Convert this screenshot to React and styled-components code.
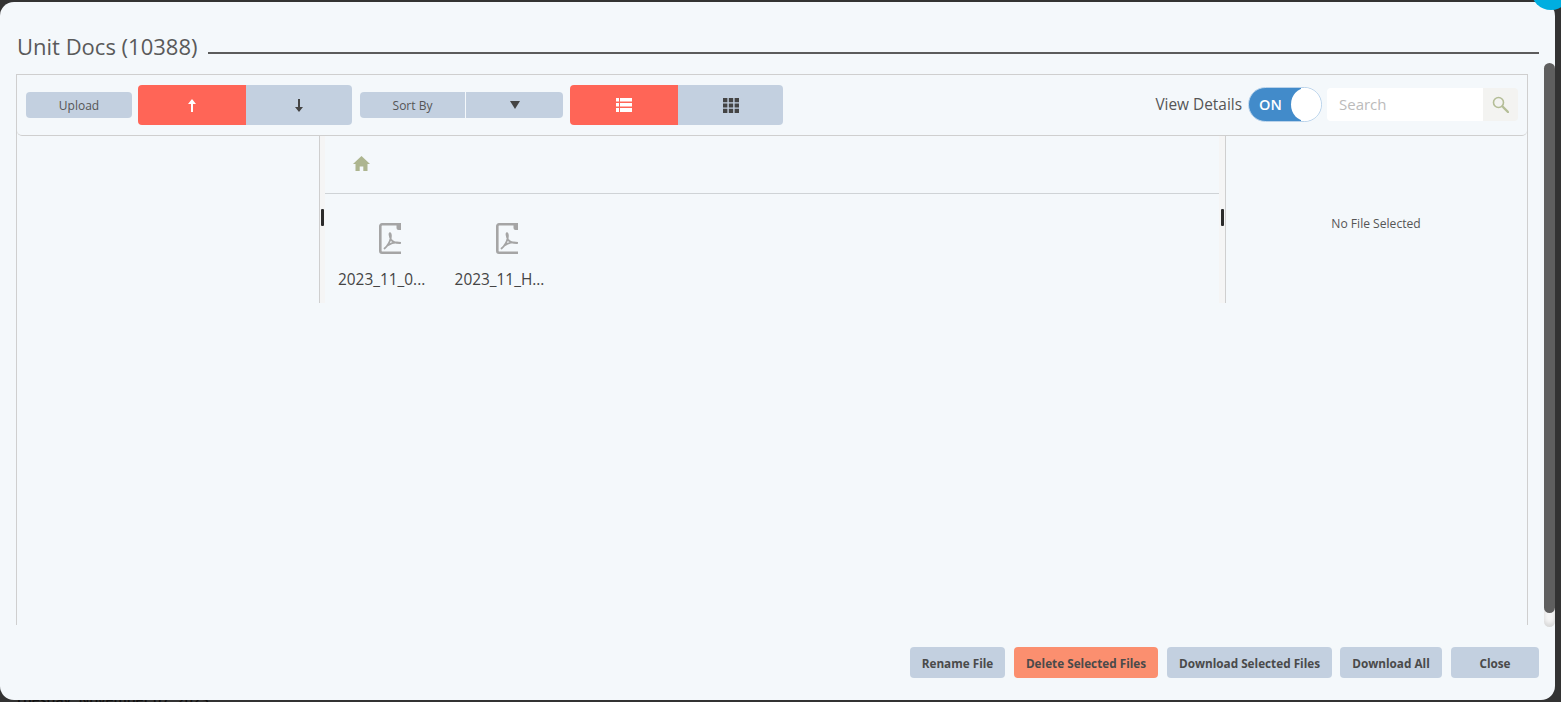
import React from "react";
import styled, { createGlobalStyle } from "styled-components";

const Global = createGlobalStyle`
  html, body {
    margin: 0;
    padding: 0;
    height: 100%;
    overflow: hidden;
    background: #333;
    font-family: "Open Sans", "Liberation Sans", sans-serif;
  }
`;

const Backdrop = styled.div`
  position: relative;
  width: 1561px;
  height: 702px;
  box-sizing: border-box;
  padding: 2px 6px 2px 0;
  background: #333;
  overflow: hidden;
`;

const BlueBlob = styled.div`
  position: absolute;
  top: -30px;
  right: -10px;
  width: 40px;
  height: 40px;
  border-radius: 50%;
  background: #00aee0;
  z-index: 2;
`;

const BehindText = styled.div`
  position: absolute;
  left: 15px;
  top: 690px;
  color: #111;
  font-size: 14px;
  font-weight: 600;
  line-height: 20px;
`;

const Modal = styled.div`
  position: relative;
  height: 100%;
  display: flex;
  flex-direction: column;
  background: #f4f8fb;
  border-radius: 14px;
  overflow: hidden;
`;

const ScrollTrack = styled.div`
  position: absolute;
  top: 61px;
  right: 0;
  width: 11px;
  height: 564px;
  border-radius: 6px;
  background: #f4f4f4;
  box-shadow: inset 0 -3px 4px rgba(0, 0, 0, 0.12);
`;

const ScrollThumb = styled.div`
  height: 550px;
  border-radius: 6px;
  background: #5f5f5f;
`;

const TitleRow = styled.div`
  display: flex;
  align-items: center;
  gap: 11px;
  height: 72px;
  box-sizing: border-box;
  padding: 16px 16px 0 17px;
`;

const Title = styled.h1`
  margin: 0;
  font-size: 22px;
  font-weight: 400;
  line-height: 38px;
  color: #5a5a5a;
  white-space: nowrap;
`;

const TitleLine = styled.div`
  flex: 1;
  height: 2px;
  margin-top: 14px;
  background: #5c5c5c;
`;

const Panel = styled.div`
  height: 551px;
  margin: 0 27px 0 16px;
  border: 1px solid #cfcfcf;
  border-bottom: 0;
  box-sizing: border-box;
`;

const Toolbar = styled.div`
  display: flex;
  align-items: center;
  height: 61px;
  box-sizing: border-box;
  padding: 0 9px;
  border-bottom: 1px solid #cfcfcf;
  border-radius: 0 0 5px 5px;
`;

const SmallButton = styled.button`
  width: 106px;
  height: 26px;
  margin: 0 6px 0 0;
  padding: 0;
  border: 0;
  border-radius: 4px;
  background: #c3d0e0;
  color: #555;
  font: 400 12px "Open Sans", sans-serif;
`;

const Segment = styled.div`
  display: flex;
  height: 40px;
  margin-right: ${(p) => p.$gap}px;
  border-radius: 4px;
  overflow: hidden;
`;

const SegButton = styled.button`
  display: flex;
  align-items: center;
  justify-content: center;
  width: ${(p) => p.$w}px;
  padding: 0;
  border: 0;
  background: ${(p) => (p.$active ? "#ff6557" : "#c3d0e0")};
  color: ${(p) => (p.$active ? "#fff" : "#444")};
`;

const SortGroup = styled.div`
  display: flex;
  height: 26px;
  width: 203px;
  margin-right: 7px;
  border-radius: 4px;
  overflow: hidden;
  background: #c3d0e0;
`;

const SortLabel = styled.div`
  display: flex;
  align-items: center;
  justify-content: center;
  width: 105px;
  border-right: 1px solid #f4f8fb;
  color: #555;
  font-size: 12px;
`;

const SortCaret = styled.div`
  flex: 1;
  display: flex;
  align-items: center;
  justify-content: center;
  color: #444;
`;

const Spacer = styled.div`
  flex: 1;
`;

const ViewLabel = styled.span`
  margin: 0 6px 2px 0;
  color: #555;
  font-size: 15.4px;
`;

const Toggle = styled.div`
  display: flex;
  align-items: center;
  width: 74px;
  height: 35px;
  margin: 0 5px 2px 0;
  box-sizing: border-box;
  border: 1px solid #b9d2ea;
  border-radius: 18px;
  background: linear-gradient(90deg, #428bca 0 72%, #fff 72%);
  overflow: hidden;
`;

const ToggleText = styled.span`
  width: 42px;
  padding-left: 10px;
  box-sizing: border-box;
  color: #fff;
  font-size: 14.5px;
  font-weight: 600;
`;

const ToggleKnob = styled.span`
  width: 31px;
  height: 33px;
  margin-left: 1px;
  border-radius: 50%;
  background: #fff;
`;

const SearchInput = styled.input`
  width: 156px;
  height: 33px;
  margin-bottom: 2px;
  box-sizing: border-box;
  padding: 0 12px;
  border: 0;
  border-radius: 4px 0 0 4px;
  background: #fff;
  color: #555;
  font: 400 15px "Open Sans", sans-serif;
  &::placeholder {
    color: #bbb;
    opacity: 1;
  }
`;

const SearchButton = styled.div`
  display: flex;
  align-items: center;
  justify-content: center;
  width: 35px;
  height: 33px;
  margin-bottom: 2px;
  border-radius: 0 4px 4px 0;
  background: #f3f3f1;
`;

const Columns = styled.div`
  display: flex;
  height: 167px;
`;

const LeftPane = styled.div`
  width: 302px;
`;

const Splitter = styled.div`
  display: flex;
  align-items: center;
  justify-content: center;
  width: ${(p) => (p.$side === "left" ? 6 : 7)}px;
  padding-bottom: 4px;
  box-sizing: border-box;
  background: #f5f5f5;
  ${(p) => (p.$side === "left" ? "border-left: 1px solid #cfcfcf;" : "border-right: 1px solid #cfcfcf;")}
`;

const Handle = styled.div`
  width: 3px;
  height: 17px;
  border-radius: 1px;
  background: #2b2b2b;
`;

const CenterPane = styled.div`
  width: 894px;
`;

const Breadcrumb = styled.div`
  display: flex;
  align-items: center;
  height: 58px;
  box-sizing: border-box;
  padding: 0 0 3px 28px;
  border-bottom: 1px solid #cfd3d6;
`;

const FileGrid = styled.div`
  display: flex;
  padding: 29px 0 0 13px;
`;

const FileItem = styled.div`
  display: flex;
  flex-direction: column;
  align-items: flex-start;
  width: 116.6px;
`;

const FileIconBox = styled.div`
  display: flex;
  margin-left: 41px;
`;

const FileName = styled.div`
  margin-top: 16px;
  color: #444;
  font-size: 15.4px;
  line-height: 20px;
  white-space: nowrap;
`;

const DetailPane = styled.div`
  flex: 1;
  padding: 80px 1px 0 0;
  color: #555;
  font-size: 12.1px;
  line-height: 16px;
  text-align: center;
`;

const Footer = styled.div`
  flex: 1;
  display: flex;
  justify-content: flex-end;
  align-items: flex-start;
  padding: 22px 16px 0 0;
`;

const FooterButton = styled.button`
  width: ${(p) => p.$w}px;
  height: 31px;
  margin-left: ${(p) => p.$gap}px;
  padding: 0;
  border: 0;
  border-radius: 4px;
  background: ${(p) => (p.$danger ? "#fb8f6f" : "#c3d0e0")};
  color: #4a4a4a;
  font: 700 11.75px "Open Sans", sans-serif;
`;

const ArrowUp = () => (
  <svg width="10" height="13" viewBox="0 0 10 13" fill="currentColor">
    <path d="M5 0 9 5H6v8H4V5H1z" />
  </svg>
);

const ArrowDown = () => (
  <svg width="10" height="13" viewBox="0 0 10 13" fill="currentColor">
    <path d="M4 0h2v8h3l-4 5-4-5h3z" />
  </svg>
);

const CaretDown = () => (
  <svg width="10" height="8" viewBox="0 0 10 8" fill="currentColor">
    <path d="M0 0h10L5 8z" />
  </svg>
);

const ListIcon = () => (
  <svg width="16" height="14" viewBox="0 0 16 14" fill="currentColor">
    <path d="M0 0h3v3.6H0zM4 0h12v3.6H4zM0 5h3v3.6H0zM4 5h12v3.6H4zM0 10h3v4H0zM4 10h12v4H4z" />
  </svg>
);

const GridIcon = () => (
  <svg width="16" height="15" viewBox="0 0 16 15" fill="currentColor">
    <path d="M0 0h4.4v4.2H0zM5.8 0h4.4v4.2H5.8zM11.6 0H16v4.2h-4.4zM0 5.4h4.4v4.2H0zM5.8 5.4h4.4v4.2H5.8zM11.6 5.4H16v4.2h-4.4zM0 10.8h4.4V15H0zM5.8 10.8h4.4V15H5.8zM11.6 10.8H16V15h-4.4z" />
  </svg>
);

const SearchIcon = () => (
  <svg width="17" height="17" viewBox="0 0 17 17" fill="none" stroke="#b4bd97">
    <circle cx="6.5" cy="6.5" r="5" strokeWidth="1.6" />
    <path d="M10.5 10.5 16 16" strokeWidth="2.4" strokeLinecap="round" />
  </svg>
);

const HomeIcon = () => (
  <svg width="17" height="15" viewBox="0 0 17 15" fill="#adb58f">
    <path d="M8.5 0 17 8h-2.5v7H10.3v-4.600H6.700V15H2.500V8H0z" />
  </svg>
);

const PdfIcon = () => (
  <svg width="22" height="31" viewBox="0 0 22 31" fill="none" stroke="#a5a5a5">
    <path d="M22 29.700H3A1.700 1.700 0 0 1 1.300 28V3A1.700 1.700 0 0 1 3 1.300H22" strokeWidth="2.600" />
    <path d="M17.500 0H21a1 1 0 0 1 1 1V7H19.500a2 2 0 0 1-2-2z" fill="#a5a5a5" stroke="none" />
    <path d="M5.500 25.500C8.500 23 10.800 19 11.700 15 12.200 12.500 11.800 10 11 10 10 10 10.500 13.500 12 16.500 13.500 19 16.500 20.300 22 20 18 18.800 12.500 19.800 8.500 22.500" strokeWidth="1.700" strokeLinecap="round" />
  </svg>
);

const files = ["2023_11_0...", "2023_11_H..."];

export default function App() {
  return (
    <Backdrop>
      <Global />
      <BlueBlob />
      <BehindText>Tuesday, November 07, 2023</BehindText>
      <Modal>
        <ScrollTrack>
          <ScrollThumb />
        </ScrollTrack>
        <TitleRow>
          <Title>Unit Docs (10388)</Title>
          <TitleLine />
        </TitleRow>
        <Panel>
          <Toolbar>
            <SmallButton>Upload</SmallButton>
            <Segment $gap={8}>
              <SegButton $w={108} $active>
                <ArrowUp />
              </SegButton>
              <SegButton $w={106}>
                <ArrowDown />
              </SegButton>
            </Segment>
            <SortGroup>
              <SortLabel>Sort By</SortLabel>
              <SortCaret>
                <CaretDown />
              </SortCaret>
            </SortGroup>
            <Segment $gap={0}>
              <SegButton $w={108} $active>
                <ListIcon />
              </SegButton>
              <SegButton $w={105}>
                <GridIcon />
              </SegButton>
            </Segment>
            <Spacer />
            <ViewLabel>View Details</ViewLabel>
            <Toggle>
              <ToggleText>ON</ToggleText>
              <ToggleKnob />
            </Toggle>
            <SearchInput placeholder="Search" />
            <SearchButton>
              <SearchIcon />
            </SearchButton>
          </Toolbar>
          <Columns>
            <LeftPane />
            <Splitter $side="left">
              <Handle />
            </Splitter>
            <CenterPane>
              <Breadcrumb>
                <HomeIcon />
              </Breadcrumb>
              <FileGrid>
                {files.map((name) => (
                  <FileItem key={name}>
                    <FileIconBox>
                      <PdfIcon />
                    </FileIconBox>
                    <FileName>{name}</FileName>
                  </FileItem>
                ))}
              </FileGrid>
            </CenterPane>
            <Splitter $side="right">
              <Handle />
            </Splitter>
            <DetailPane>No File Selected</DetailPane>
          </Columns>
        </Panel>
        <Footer>
          <FooterButton $w={95} $gap={0}>Rename File</FooterButton>
          <FooterButton $w={144} $gap={9} $danger>Delete Selected Files</FooterButton>
          <FooterButton $w={165} $gap={9}>Download Selected Files</FooterButton>
          <FooterButton $w={102} $gap={8}>Download All</FooterButton>
          <FooterButton $w={88} $gap={9}>Close</FooterButton>
        </Footer>
      </Modal>
    </Backdrop>
  );
}
